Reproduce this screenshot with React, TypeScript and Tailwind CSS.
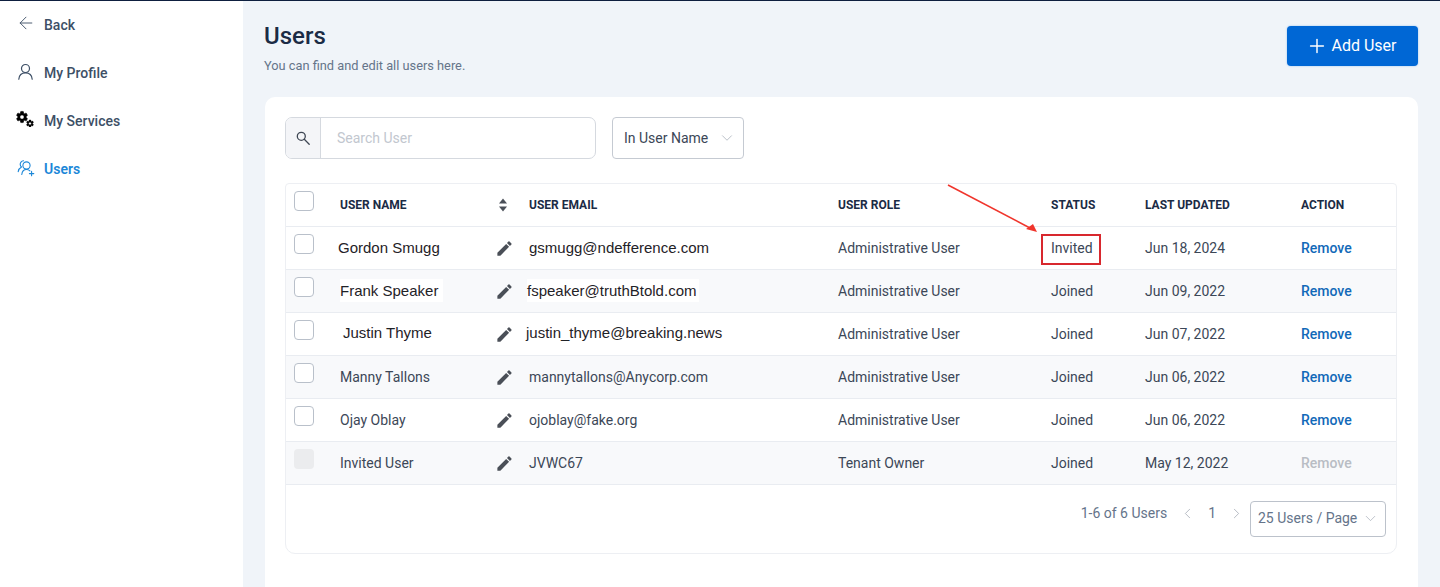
import React from "react";
import { ArrowLeft, Plus, ChevronDown, ChevronLeft, ChevronRight } from "lucide-react";
import { MdEdit } from "react-icons/md";

const rows = [
  { name: "Gordon Smugg", email: "gsmugg@ndefference.com", role: "Administrative User", status: "Invited", date: "Jun 18, 2024", pasted: true, nameCls: "-ml-[2px]", emailCls: "", bg: "bg-white" },
  { name: "Frank Speaker", email: "fspeaker@truthBtold.com", role: "Administrative User", status: "Joined", date: "Jun 09, 2022", pasted: true, nameCls: "", emailCls: "-ml-[2px]", bg: "bg-[#f8f9fb]", patch: true },
  { name: "Justin Thyme", email: "justin_thyme@breaking.news", role: "Administrative User", status: "Joined", date: "Jun 07, 2022", pasted: true, nameCls: "ml-[3px] -mt-[2px]", emailCls: "-ml-[3px] -mt-[2px]", bg: "bg-white" },
  { name: "Manny Tallons", email: "mannytallons@Anycorp.com", role: "Administrative User", status: "Joined", date: "Jun 06, 2022", bg: "bg-[#f8f9fb]" },
  { name: "Ojay Oblay", email: "ojoblay@fake.org", role: "Administrative User", status: "Joined", date: "Jun 06, 2022", bg: "bg-white" },
  { name: "Invited User", email: "JVWC67", role: "Tenant Owner", status: "Joined", date: "May 12, 2022", bg: "bg-[#f8f9fb]", disabled: true },
];

const headCls = "text-[12px] font-bold text-[#1b2b45]";
const cols = "grid grid-cols-[54px_156px_33px_309px_213px_94px_156px_1fr] items-center";
const GEAR = "M19.14 12.94c.04-.3.06-.61.06-.94 0-.32-.02-.64-.07-.94l2.03-1.58c.18-.14.23-.41.12-.61l-1.92-3.32c-.12-.22-.37-.29-.59-.22l-2.39.96c-.5-.38-1.03-.7-1.62-.94l-.36-2.54c-.04-.24-.24-.41-.48-.41h-3.84c-.24 0-.43.17-.47.41l-.36 2.54c-.59.24-1.13.57-1.62.94l-2.39-.96c-.22-.08-.47 0-.59.22L2.74 8.87c-.12.21-.08.47.12.61l2.03 1.58c-.05.3-.09.63-.09.94s.02.64.07.94l-2.03 1.58c-.18.14-.23.41-.12.61l1.92 3.32c.12.22.37.29.59.22l2.39-.96c.5.38 1.03.7 1.62.94l.36 2.54c.05.24.24.41.48.41h3.84c.24 0 .44-.17.47-.41l.36-2.54c.59-.24 1.13-.56 1.62-.94l2.39.96c.22.08.47 0 .59-.22l1.92-3.32c.12-.22.07-.47-.12-.61l-2.01-1.58zM12 15.6c-1.98 0-3.6-1.62-3.6-3.6s1.62-3.6 3.6-3.6 3.6 1.62 3.6 3.6-1.62 3.6-3.6 3.6z";

function Box({ disabled }: { disabled?: boolean }) {
  return disabled ? (
    <span className="block w-[20px] h-[20px] rounded-[4px] bg-[#ebecee] -mt-[8px] ml-[8px]" />
  ) : (
    <span className="block w-[20px] h-[20px] rounded-[4px] border border-[#b9c0ca] bg-white -mt-[8px] ml-[8px]" />
  );
}

function UserIcon() {
  return (
    <svg width="18" height="18" viewBox="0 0 18 18" fill="none" stroke="#3d4f66" strokeWidth="1.2" strokeLinecap="round">
      <circle cx="8.5" cy="5.5" r="4" />
      <path d="M1.8 16.2c.3-3.8 2.8-6.4 6.7-6.4s6.4 2.6 6.7 6.4" />
    </svg>
  );
}

function GearsIcon() {
  return (
    <svg width="18" height="18" viewBox="0 0 18 18" fill="#000" className="-ml-[1px] -mt-[3px]">
      <g transform="translate(-0.96,1.04) scale(0.58)"><path d={GEAR} stroke="#000" strokeWidth="1" /></g>
      <g transform="translate(9.56,10.06) scale(0.37)"><path d={GEAR} stroke="#000" strokeWidth="1" /></g>
    </svg>
  );
}

function UsersPlusIcon() {
  return (
    <svg width="18" height="18" viewBox="0 0 18 18" fill="none" stroke="#1c87d8" strokeWidth="1.1" strokeLinecap="round">
      <circle cx="9.5" cy="6.5" r="3.6" />
      <path d="M4.8 15.5c.3-3 2-5 4.7-5 1.5 0 2.6.5 3.4 1.4" />
      <path d="M6.5 1.8C4.4 2 3 3.6 3.2 5.6c.1 1 .6 1.9 1.3 2.4C2.6 9 1.5 10.6 1.2 12.6" />
      <path d="M14.6 12.4v4.4M12.4 14.6h4.4" />
    </svg>
  );
}

function SearchIcon() {
  return (
    <svg width="14" height="14" viewBox="0 0 14 14" fill="none" stroke="#3f4754" strokeWidth="1.3" strokeLinecap="round">
      <circle cx="5.3" cy="5.3" r="4" />
      <path d="M8.3 8.3 13.2 13.2" />
    </svg>
  );
}

function SortIcon() {
  return (
    <svg width="10" height="14" viewBox="0 0 10 14" fill="#4a5058">
      <path d="M5 0.5 9 5.5H1Z" />
      <path d="M5 13.5 1 8.5h8Z" />
    </svg>
  );
}

function NavItem({ icon, label, active }: { icon: React.ReactNode; label: string; active?: boolean }) {
  return (
    <div className="h-[48px] flex items-center pl-[17px]">
      <span className="w-[27px] -mt-[3px] flex items-center">{icon}</span>
      <span className={`text-[14px] ${active ? "font-semibold text-[#1c87d8]" : "font-medium text-[#3d4f66]"}`}>{label}</span>
    </div>
  );
}

export default function App() {
  return (
    <div className="h-[587px] w-[1440px] overflow-hidden flex flex-col bg-[#f0f4f9] font-['Roboto',sans-serif]">
      <div className="h-[1px] bg-[#0e1f3f] shrink-0" />
      <div className="flex flex-1 min-h-0">
        <aside className="w-[243px] shrink-0 bg-white">
          <NavItem icon={<ArrowLeft size={20} strokeWidth={1.1} color="#3d4f66" className="-ml-[1px] -mt-[1px]" />} label="Back" />
          <NavItem icon={<UserIcon />} label="My Profile" />
          <NavItem icon={<GearsIcon />} label="My Services" />
          <NavItem icon={<UsersPlusIcon />} label="Users" active />
        </aside>
        <main className="flex-1 min-w-0 pl-[21px] pr-[22px]">
          <div className="flex justify-between h-[96px] pt-[25px]">
            <div>
              <h1 className="text-[24px] leading-[21px] font-medium text-[#1b2b45]">Users</h1>
              <p className="text-[12.8px] leading-[16px] mt-[11px] text-[#65748a]">You can find and edit all users here.</p>
            </div>
            <button className="w-[131px] h-[40px] rounded-[4px] bg-[#0067d5] text-white text-[16px] pr-[2px] flex items-center justify-center gap-[4px] shadow-[0_0_2px_#8fbdf0]">
              <Plus size={22} strokeWidth={1.6} className="-ml-[1px]" />
              <span>Add User</span>
            </button>
          </div>
          <section className="ml-[1px] h-[500px] bg-white rounded-t-[10px] pt-[20px] pl-[20px] pr-[21px]">
            <div className="flex gap-[16px]">
              <div className="flex h-[42px] w-[311px] rounded-[7px] border border-[#d5d9df] overflow-hidden">
                <span className="w-[35px] bg-[#f4f5f8] border-r border-[#d5d9df] flex items-center justify-center shrink-0">
                  <SearchIcon />
                </span>
                <span className="pl-[16px] self-center text-[14px] text-[#c2c7cf]">Search User</span>
              </div>
              <div className="flex items-center h-[42px] w-[132px] rounded-[4px] border border-[#c5cad2] pl-[11px]">
                <span className="text-[14px] text-[#3c4757]">In User Name</span>
                <ChevronDown size={18} strokeWidth={1} color="#a4abb5" className="ml-[10px]" />
              </div>
            </div>
            <div className="relative mt-[24px] h-[371px] rounded-b-[10px] rounded-t-[4px] border border-[#edeff3]">
              <div className={`${cols} h-[42px] ${headCls}`}>
                <Box />
                <span>USER NAME</span>
                <span className="flex pl-[2px]"><SortIcon /></span>
                <span>USER EMAIL</span>
                <span>USER ROLE</span>
                <span>STATUS</span>
                <span>LAST UPDATED</span>
                <span>ACTION</span>
              </div>
              {rows.map((r) => (
                <div key={r.name} className={`${cols} h-[43px] border-t border-[#e9ecf1] ${r.bg} text-[14px] text-[#3c4757]`}>
                  <Box disabled={r.disabled} />
                  {r.pasted ? (
                    <span className={`font-['Liberation_Sans',sans-serif] text-[#1f2227] text-[15px] ${r.nameCls}`}>
                      <span className={r.patch ? "bg-white py-[3px] pr-[5px] -mr-[5px]" : ""}>{r.name}</span>
                    </span>
                  ) : (
                    <span>{r.name}</span>
                  )}
                  <span className="flex"><MdEdit size={19} color="#4a4f57" className="-ml-[1px] mt-[1px]" /></span>
                  {r.pasted ? (
                    <span className={`font-['Liberation_Sans',sans-serif] text-[#1f2227] text-[15px] ${r.emailCls}`}>
                      <span className={r.patch ? "bg-white py-[3px] pr-[3px]" : ""}>{r.email}</span>
                    </span>
                  ) : (
                    <span>{r.email}</span>
                  )}
                  <span>{r.role}</span>
                  <span>{r.status}</span>
                  <span>{r.date}</span>
                  <span className={`font-medium ${r.disabled ? "text-[#b9bdc4]" : "text-[#1269b8]"}`}>Remove</span>
                </div>
              ))}
              <div className="border-t border-[#e9ecf1] flex items-center justify-end h-[68px] pr-[10px] text-[14px] text-[#65748a]">
                <span className="mr-[12px] -mt-[10px]">1-6 of 6 Users</span>
                <ChevronLeft size={17} strokeWidth={1} color="#9aa2ad" className="-mt-[10px]" />
                <span className="mx-[12px] -mt-[10px]">1</span>
                <ChevronRight size={17} strokeWidth={1} color="#9aa2ad" className="-mt-[10px] mr-[5px]" />
                <div className="flex items-center h-[36px] w-[136px] rounded-[4px] border border-[#bcc2cb] pl-[7px]">
                  <span>25 Users / Page</span>
                  <ChevronDown size={17} strokeWidth={1} color="#a4abb5" className="ml-[5px]" />
                </div>
              </div>

              <div className="absolute left-[755px] top-[50px] w-[60px] h-[31px] border-2 border-[#d8282e]" />
              <svg className="absolute left-[660px] top-[0px]" width="100" height="52" viewBox="0 0 100 52" fill="none">
                <path d="M2 1 84 44" stroke="#f0352c" strokeWidth="1.5" />
                <path d="M91 48 80 45 87 40Z" fill="#f0352c" />
              </svg>
            </div>
          </section>
        </main>
      </div>
    </div>
  );
}
